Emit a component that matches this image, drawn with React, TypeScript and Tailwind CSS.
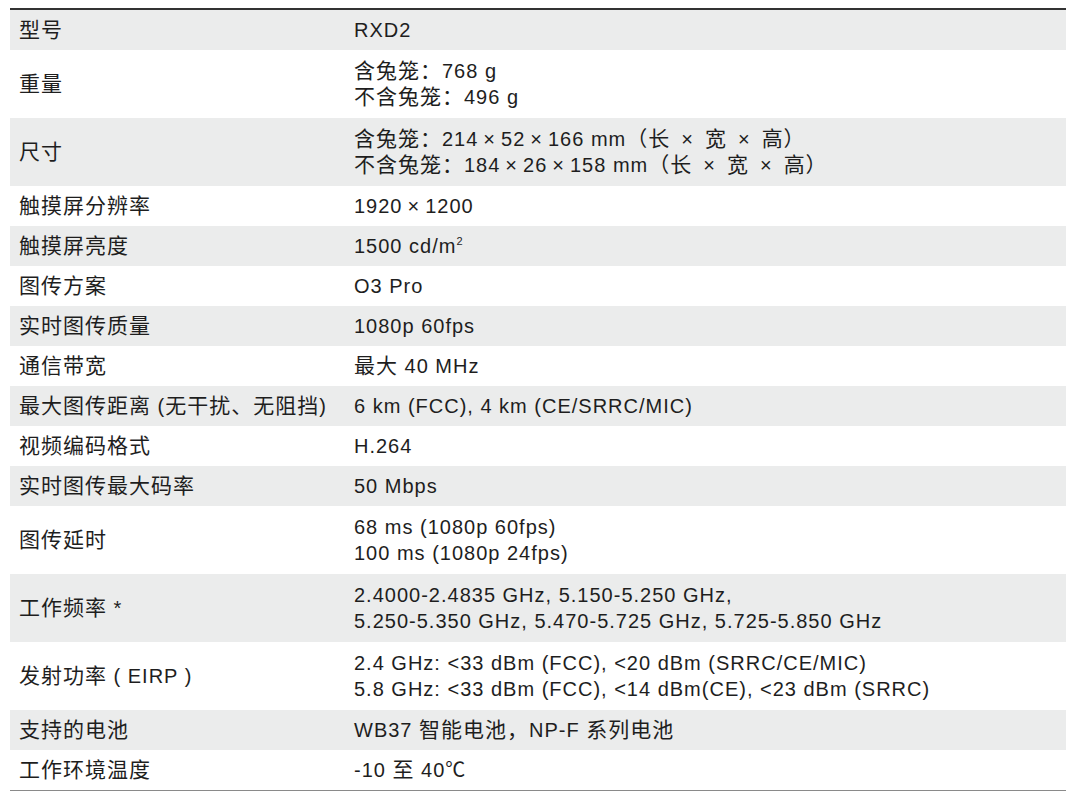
import React from "react";

interface SpecRow {
  label: string;
  lines: string[];
}

const rows: SpecRow[] = [
  { label: "型号", lines: ["RXD2"] },
  { label: "重量", lines: ["含兔笼：768 g", "不含兔笼：496 g"] },
  {
    label: "尺寸",
    lines: [
      "含兔笼：214\u2009×\u200952\u2009×\u2009166 mm（长\u2002×\u2002宽\u2002×\u2002高）",
      "不含兔笼：184\u2009×\u200926\u2009×\u2009158 mm（长\u2002×\u2002宽\u2002×\u2002高）",
    ],
  },
  { label: "触摸屏分辨率", lines: ["1920\u2009×\u20091200"] },
  { label: "触摸屏亮度", lines: ["1500 cd/m^2"] },
  { label: "图传方案", lines: ["O3 Pro"] },
  { label: "实时图传质量", lines: ["1080p 60fps"] },
  { label: "通信带宽", lines: ["最大 40 MHz"] },
  { label: "最大图传距离 (无干扰、无阻挡)", lines: ["6 km (FCC), 4 km (CE/SRRC/MIC)"] },
  { label: "视频编码格式", lines: ["H.264"] },
  { label: "实时图传最大码率", lines: ["50 Mbps"] },
  { label: "图传延时", lines: ["68 ms (1080p 60fps)", "100 ms (1080p 24fps)"] },
  {
    label: "工作频率 *",
    lines: [
      "2.4000-2.4835 GHz, 5.150-5.250 GHz,",
      "5.250-5.350 GHz, 5.470-5.725 GHz, 5.725-5.850 GHz",
    ],
  },
  {
    label: "发射功率 ( EIRP )",
    lines: [
      "2.4 GHz: <33 dBm (FCC), <20 dBm (SRRC/CE/MIC)",
      "5.8 GHz: <33 dBm (FCC), <14 dBm(CE), <23 dBm (SRRC)",
    ],
  },
  { label: "支持的电池", lines: ["WB37 智能电池，NP-F 系列电池"] },
  { label: "工作环境温度", lines: ["-10 至 40℃"] },
];

const CJK = /([\u3000-\u303f\u4e00-\u9fff\uff00-\uffef]+)/;

// Chinese glyphs sit a touch larger than the Latin ones in the source
const Mixed: React.FC<{ text: string }> = ({ text }) => {
  const [main, sup] = text.split("^");
  return (
    <>
      {main.split(CJK).map((part, i) =>
        i % 2 === 1 ? (
          <span key={i} className="text-[21px]">
            {part}
          </span>
        ) : (
          <span key={i}>{part}</span>
        )
      )}
      {sup && <sup className="text-[11px] relative -top-[8px]">{sup}</sup>}
    </>
  );
};

export default function App() {
  return (
    <div className="w-[1080px] h-[799px] bg-white pt-[8px] pl-[10px]">
      <div
        className="w-[1056px] border-t-2 border-b border-t-[#333333] border-b-[#8a8a8a] text-[20px] leading-[26px] tracking-[1px] text-[#1e1e1e]"
        style={{ fontFamily: '"Liberation Sans", "Noto Sans CJK SC", sans-serif' }}
      >
        {rows.map((row, i) => (
          <div
            key={i}
            className={`flex items-center ${row.lines.length > 1 ? "h-[68px]" : "h-[40px]"} ${
              i % 2 === 0 ? "bg-[#ebecec]" : "bg-white"
            }`}
          >
            <div className="w-[344px] pl-[9px] whitespace-nowrap">
              <Mixed text={row.label} />
            </div>
            <div className="flex-1 whitespace-nowrap">
              {row.lines.map((line, j) => (
                <div key={j}>
                  <Mixed text={line} />
                </div>
              ))}
            </div>
          </div>
        ))}
      </div>
    </div>
  );
}
